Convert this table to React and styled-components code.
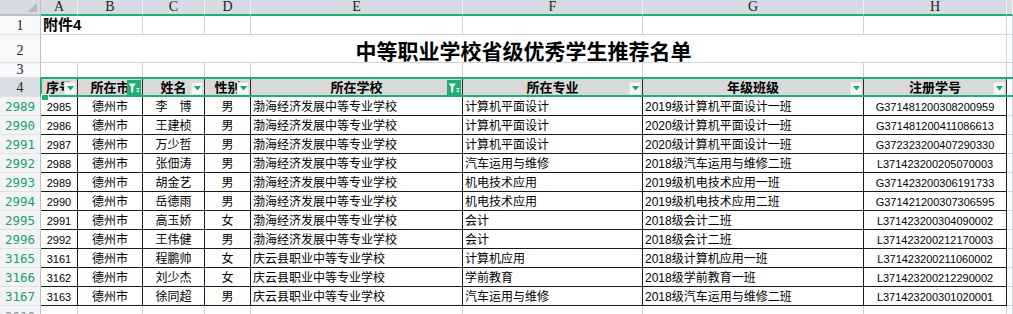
import React from "react";
import styled, { createGlobalStyle, css } from "styled-components";

const GREEN = "#1fae76";
const GRID = "#cfd3de";
const CJK = `"Liberation Sans", "Noto Sans CJK SC", sans-serif`;

const Global = createGlobalStyle`
  html, body { margin: 0; padding: 0; background: #ffffff; overflow: hidden; }
  #root { width: 1013px; height: 314px; }
`;

const Sheet = styled.div`
  position: relative;
  width: 1013px;
  height: 314px;
  overflow: hidden;
  display: grid;
  grid-template-columns: 41px 37px 65px 62px 46px 212px 180px 221px 143px 1fr;
  grid-template-rows: 16px 19px 28px 15px 19px repeat(11, 19px) 19px;
  background: #fff;
`;

const Corner = styled.div`
  position: relative;
  background: #d6dae2;
  border-right: 1px solid #b9bfcc;
  border-bottom: 2px solid #b9bfcc;
  box-sizing: border-box;
  &::after {
    content: "";
    position: absolute;
    right: 3px;
    bottom: 2px;
    width: 0;
    height: 0;
    border-left: 9px solid transparent;
    border-bottom: 9px solid #b3b8c2;
  }
`;

const ColHead = styled.div`
  background: #d6dae2;
  border-right: 1px solid #eef0f3;
  border-bottom: 2px solid ${GREEN};
  box-sizing: border-box;
  font-family: "Liberation Serif", "DejaVu Serif", serif;
  font-size: 14px;
  line-height: 14px;
  color: #222;
  text-align: center;
  overflow: hidden;
`;

const RowHead = styled.div`
  box-sizing: border-box;
  border-right: 1px solid #b9bfcc;
  border-bottom: 1px solid #dfe2e8;
  display: flex;
  align-items: flex-end;
  justify-content: center;
  overflow: hidden;
  ${(p) =>
    p.$tone === "filtered"
      ? css`
          background: #f1f3f7;
          color: #1e9e69;
          font-family: "DejaVu Sans Mono", monospace;
          font-size: 12.5px;
          line-height: 17px;
        `
      : p.$tone === "muted"
      ? css`
          background: #f1f3f7;
          color: #8a8f99;
          font-family: "DejaVu Sans Mono", monospace;
          font-size: 12.5px;
          line-height: 17px;
          align-items: flex-start;
          padding-top: 2px;
        `
      : css`
          background: ${p.$tone === "selected" ? "#d9dce2" : "#f7f8fa"};
          color: #222;
          font-family: "Liberation Serif", "DejaVu Serif", serif;
          font-size: 14px;
          line-height: ${p.$lh || 16}px;
        `}
`;

const Cell = styled.div`
  position: relative;
  box-sizing: border-box;
  overflow: hidden;
  white-space: nowrap;
  display: flex;
  align-items: flex-end;
  font-family: ${CJK};
  color: #000;
  justify-content: ${(p) => (p.$align === "left" ? "flex-start" : "center")};
  padding-left: ${(p) => (p.$align === "left" ? "2px" : "0")};
  ${(p) =>
    p.$kind === "blank"
      ? css`
          border-right: 1px solid ${GRID};
          border-bottom: 1px solid ${GRID};
        `
      : p.$kind === "head"
      ? css`
          background: #d9d9d9;
          border-right: 1px solid #2b2b2b;
          border-bottom: 1px solid #2b2b2b;
          font-weight: 700;
          font-size: 13px;
          line-height: 16px;
        `
      : css`
          border-right: 1px solid #1a1a1a;
          border-bottom: 1px solid #1a1a1a;
          font-size: ${p.$size || 12}px;
          line-height: 15px;
        `}
`;

const Attach = styled(Cell)`
  font-weight: 700;
  font-size: 15px;
  line-height: 18px;
  padding-left: 2px;
  justify-content: flex-start;
  border-right: none;
  overflow: visible;
`;

const Title = styled.div`
  grid-column: span 8;
  box-sizing: border-box;
  border-right: 1px solid ${GRID};
  border-bottom: 1px solid ${GRID};
  display: flex;
  align-items: flex-end;
  justify-content: center;
  font-family: "Noto Sans CJK SC", sans-serif;
  font-weight: 700;
  font-size: 21px;
  line-height: 24px;
  color: #000;
`;

const FilterBtn = styled.span`
  position: absolute;
  right: 1px;
  bottom: 1px;
  box-sizing: border-box;
  display: flex;
  align-items: center;
  justify-content: center;
  ${(p) =>
    p.$active
      ? css`
          width: 14px;
          height: 15px;
          background: ${GREEN};
        `
      : css`
          width: 12px;
          height: 13px;
          background: #f6f6f6;
          border: 1px solid #e2e2e2;
        `}
`;

const Selection = styled.div`
  position: absolute;
  left: 40px;
  right: 0;
  top: 77px;
  height: 20px;
  box-sizing: border-box;
  border-top: 2px solid ${GREEN};
  border-bottom: 2px solid ${GREEN};
  border-left: 2px solid ${GREEN};
  pointer-events: none;
`;

const FillHandle = styled.div`
  position: absolute;
  left: 41px;
  top: 94px;
  width: 6px;
  height: 5px;
  background: ${GREEN};
  border: 1px solid #fff;
`;

const Funnel = () => (
  <svg width="12" height="12" viewBox="0 0 12 12">
    <path d="M0.5 1.5 H8 L5.3 5 V10 L3.3 11 V5 Z" fill="#fff" />
    <rect x="8.5" y="6" width="3" height="1.2" fill="#fff" />
    <rect x="8.5" y="8.6" width="3" height="1.2" fill="#fff" />
  </svg>
);

const Arrow = () => (
  <svg width="7" height="5" viewBox="0 0 7 5">
    <polygon points="0,0 7,0 3.5,4.5" fill="#19a56c" />
  </svg>
);

const headers = [
  { t: "序号", f: false },
  { t: "所在市", f: true },
  { t: "姓名", f: false },
  { t: "性别", f: false },
  { t: "所在学校", f: true },
  { t: "所在专业", f: false },
  { t: "年级班级", f: false },
  { t: "注册学号", f: false },
];

const B = "渤海经济发展中等专业学校";
const Q = "庆云县职业中等专业学校";

const rows = [
  ["2989", "2985", "李　博", "男", B, "计算机平面设计", "2019级计算机平面设计一班", "G371481200308200959"],
  ["2990", "2986", "王建桢", "男", B, "计算机平面设计", "2020级计算机平面设计一班", "G371481200411086613"],
  ["2991", "2987", "万少哲", "男", B, "计算机平面设计", "2020级计算机平面设计一班", "G372323200407290330"],
  ["2992", "2988", "张佃涛", "男", B, "汽车运用与维修", "2018级汽车运用与维修二班", "L371423200205070003"],
  ["2993", "2989", "胡金艺", "男", B, "机电技术应用", "2019级机电技术应用一班", "G371423200306191733"],
  ["2994", "2990", "岳德雨", "男", B, "机电技术应用", "2019级机电技术应用二班", "G371421200307306595"],
  ["2995", "2991", "高玉娇", "女", B, "会计", "2018级会计二班", "L371423200304090002"],
  ["2996", "2992", "王伟健", "男", B, "会计", "2018级会计二班", "L371423200212170003"],
  ["3165", "3161", "程鹏帅", "女", Q, "计算机应用", "2018级计算机应用一班", "L371423200211060002"],
  ["3166", "3162", "刘少杰", "女", Q, "学前教育", "2018级学前教育一班", "L371423200212290002"],
  ["3167", "3163", "徐同超", "男", Q, "汽车运用与维修", "2018级汽车运用与维修二班", "L371423200301020001"],
];

const letters = ["A", "B", "C", "D", "E", "F", "G", "H", ""];

export default function App() {
  return (
    <>
      <Global />
      <Sheet>
        <Corner />
        {letters.map((l, i) => (
          <ColHead key={"c" + i}>{l}</ColHead>
        ))}

        <RowHead $lh={17}>1</RowHead>
        <Attach $kind="blank">附件4</Attach>
        {Array.from({ length: 8 }).map((_, i) => (
          <Cell key={"r1" + i} $kind="blank" />
        ))}

        <RowHead $lh={22}>2</RowHead>
        <Title>中等职业学校省级优秀学生推荐名单</Title>
        <Cell $kind="blank" />

        <RowHead $lh={14}>3</RowHead>
        {Array.from({ length: 9 }).map((_, i) => (
          <Cell key={"r3" + i} $kind="blank" />
        ))}

        <RowHead $tone="selected" $lh={17}>4</RowHead>
        {headers.map((h, i) => (
          <Cell key={"h" + i} $kind="head">
            {h.t}
            <FilterBtn $active={h.f}>{h.f ? <Funnel /> : <Arrow />}</FilterBtn>
          </Cell>
        ))}
        <Cell $kind="blank" />

        {rows.map((r) => (
          <React.Fragment key={r[0]}>
            <RowHead $tone="filtered">{r[0]}</RowHead>
            <Cell $kind="data" $size={11}>{r[1]}</Cell>
            <Cell $kind="data">德州市</Cell>
            <Cell $kind="data">{r[2]}</Cell>
            <Cell $kind="data">{r[3]}</Cell>
            <Cell $kind="data" $align="left">{r[4]}</Cell>
            <Cell $kind="data" $align="left">{r[5]}</Cell>
            <Cell $kind="data" $align="left">{r[6]}</Cell>
            <Cell $kind="data" $size={11}>{r[7]}</Cell>
            <Cell $kind="blank" />
          </React.Fragment>
        ))}

        <RowHead $tone="muted">3010</RowHead>
        {Array.from({ length: 9 }).map((_, i) => (
          <Cell key={"last" + i} $kind="blank" />
        ))}

        <Selection />
        <FillHandle />
      </Sheet>
    </>
  );
}
